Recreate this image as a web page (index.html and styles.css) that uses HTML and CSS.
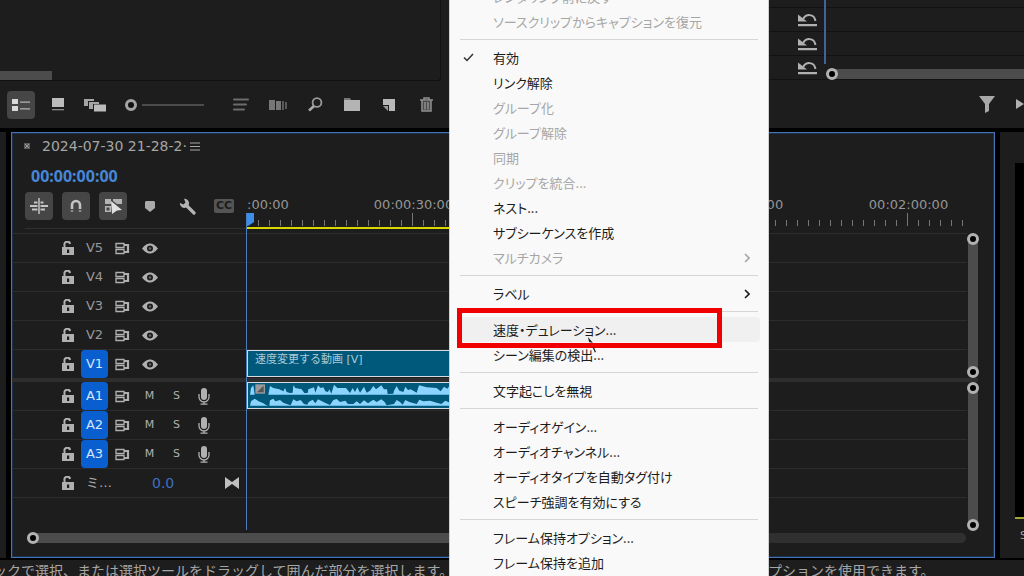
FILE: index.html
```html
<!DOCTYPE html>
<html lang="ja">
<head>
<meta charset="utf-8">
<meta name="viewport" content="width=device-width, initial-scale=1">
<title>2024-07-30 21-28-2</title>
<link rel="stylesheet" href="styles.css">
</head>
<body>
<svg class="defs" aria-hidden="true">
  <symbol id="lock" viewBox="0 0 12 15"><path d="M2.500 7V4a2.800 2.800 0 0 1 5.600-1" fill="none" stroke="currentColor" stroke-width="2"/><path fill="currentColor" fill-rule="evenodd" d="M0 6h12v8H0zM5 8.500h2.200v3.500H5z"/></symbol>
  <symbol id="sync" viewBox="0 0 15 13"><path d="M1 1.500h8v4H1zM1 7.500h8v4H1z" fill="none" stroke="currentColor" stroke-width="1.300"/><path d="M9 3h4v7H9" fill="none" stroke="currentColor" stroke-width="2.200"/></symbol>
  <symbol id="eye" viewBox="0 0 16 11"><path fill="currentColor" fill-rule="evenodd" d="M0 5.500C3 1.500 6 .5 8 .5s5 1 8 5c-3 4-6 5-8 5s-5-1-8-5zM8 2.500a3 3 0 1 0 0 6 3 3 0 0 0 0-6z"/><circle cx="8" cy="5.500" r="1.200" fill="currentColor" opacity=".5"/></symbol>
  <symbol id="mic" viewBox="0 0 12 17"><rect x="3" y="0" width="6" height="12" rx="3" fill="currentColor"/><path d="M1 6v3a5 5 0 0 0 10 0V6M6 14v2M2.500 16.200h7" fill="none" stroke="currentColor" stroke-width="1.300"/></symbol>
  <symbol id="undo" viewBox="0 0 19 14"><path d="M5 6C8 1 16 0 17.500 8" fill="none" stroke="currentColor" stroke-width="2"/><path fill="currentColor" d="M0 1.500L9 8.500H0zM0 11h19v2.200H0z"/></symbol>
  <symbol id="chev" viewBox="0 0 6 10"><path d="M1 1l4 4-4 4" fill="none" stroke="currentColor" stroke-width="1.600"/></symbol>
</svg>

<div class="app">
  <div class="upper">
    <section class="project">
      <div class="bin"><div class="bin-scroll"></div></div>
      <div class="bin-tools">
        <button class="tool on" aria-label="リスト表示"><svg width="20" height="14" viewBox="0 0 20 14"><path fill="#d8d8d8" d="M1 1h6v5H1zM1 8h6v5H1z"/><path fill="#b4b4b4" d="M9 3.500h10v1.300H9zM9 10.200h10v1.300H9z"/></svg></button>
        <button class="tool" aria-label="アイコン表示"><svg width="12" height="13" viewBox="0 0 12 13"><path fill="#bcbcbc" d="M0 0h12v9H0z"/><path fill="#8c8c8c" d="M0 11h12v1.300H0z"/></svg></button>
        <button class="tool" aria-label="フリーフォーム表示"><svg width="22" height="14" viewBox="0 0 22 14"><path fill="#a4a4a4" d="M0 1h10v2H4v5H0zM5 4h10v2H9v5H5z"/><path fill="#bcbcbc" d="M10 6.500h12v7H10z"/></svg></button>
        <input class="zoom" type="range" min="0" max="100" value="0" aria-label="ズーム">
        <button class="tool" aria-label="並べ替え"><svg width="16" height="13" viewBox="0 0 16 13"><path d="M1 1.500h14M1 6.500h12M1 11.500h10" stroke="#6c6c6c" stroke-width="2" stroke-linecap="round"/></svg></button>
        <button class="tool" aria-label="シーケンスへ自動化"><svg width="18" height="10" viewBox="0 0 18 10"><path fill="#777" d="M0 0h6v10H0zM7 1h5v9H7z"/><path fill="#595959" d="M13 1h2v9h-2zM16 2h2v7h-2z"/></svg></button>
        <button class="tool" aria-label="検索"><svg width="15" height="15" viewBox="0 0 15 15"><circle cx="9" cy="5.500" r="4.400" fill="none" stroke="#9a9a9a" stroke-width="1.800"/><path d="M6 9l-5 4.500" stroke="#aaa" stroke-width="2.600"/></svg></button>
        <button class="tool" aria-label="新規ビン"><svg width="16" height="13" viewBox="0 0 16 13"><path fill="#b4b4b4" d="M0 2h16v11H0z"/><path fill="#777" d="M0 0h6l1 2H0z"/></svg></button>
        <button class="tool" aria-label="新規項目"><svg width="13" height="14" viewBox="0 0 13 14"><path fill="#b8b8b8" d="M0 1h12v12H6V7H0z"/><path fill="#999" d="M0 8h5v5z"/></svg></button>
        <button class="tool" aria-label="消去"><svg width="13" height="15" viewBox="0 0 13 15"><path d="M2 4h9v10H2z" fill="#4a4a4a"/><path d="M0 3h13M4 2.500V1h5v1.500M2 3.500V14h9V3.500M5 5v7.500M8 5v7.500" fill="none" stroke="#909090" stroke-width="1.500"/></svg></button>
      </div>
    </section>
    <section class="effects">
      <div class="props">
        <div class="prop short"></div>
        <div class="prop"><svg width="19" height="14"><use href="#undo"/></svg></div>
        <div class="prop"><svg width="19" height="14"><use href="#undo"/></svg></div>
        <div class="prop"><svg width="19" height="14"><use href="#undo"/></svg></div>
        <div class="prop-line"></div>
        <div class="prop-bar"><i class="knob"></i></div>
      </div>
      <div class="fx-tools">
        <button class="plain" aria-label="フィルター"><svg width="16" height="17" viewBox="0 0 16 17"><path fill="#a8a8a8" d="M0 0h16L10 8v7l-4 2V8z"/></svg></button>
        <button class="plain" aria-label="再生"><svg width="8" height="10" viewBox="0 0 8 10"><path fill="#b0b0b0" d="M0 0l8 5-8 5z"/></svg></button>
      </div>
    </section>
  </div>

  <div class="middle">
    <div class="sliver"></div>
    <main class="timeline">
      <div class="tab">
        <button class="plain close" aria-label="閉じる"><svg width="6" height="6" viewBox="0 0 6 6"><path fill="#5a5a5a" d="M0 0h6v6H0z"/><path d="M1 1l4 4M5 1L1 5" stroke="#999"/></svg></button>
        <span class="seq">2024-07-30 21-28-2·</span>
        <button class="plain" aria-label="パネルメニュー"><svg width="10" height="9" viewBox="0 0 10 9"><path d="M0 1h10M0 4.500h10M0 8h10" stroke="#a8a8a8" stroke-width="1.200"/></svg></button>
      </div>
      <div class="timecode">00:00:00:00</div>
      <div class="head-row">
        <div class="seq-tools">
          <button class="tool on" aria-label="ネスト"><svg width="18" height="16" viewBox="0 0 18 16"><path d="M9 0v16" stroke="#c4c4c4" stroke-width="1.500"/><path d="M4 4.500h3.500M10.500 4.500h3M0 8h7.500M10.500 8H18M2 11.500h5.500M10.500 11.500H15" stroke="#c4c4c4" stroke-width="2.200"/></svg></button>
          <button class="tool on" aria-label="スナップ"><svg width="12" height="14" viewBox="0 0 12 14"><path d="M2 10V6a4 4 0 0 1 8 0v4" fill="none" stroke="#c4c4c4" stroke-width="2.600"/><path d="M2 11v2M10 11v2" stroke="#888" stroke-width="2.600"/></svg></button>
          <button class="tool on" aria-label="リンクされた選択"><svg width="17" height="16" viewBox="0 0 17 16"><path fill="#b4b4b4" d="M0 1h6v5H0zM8 1h9v5h-5L8 3zM0 8h6v6H0zM1.500 9.500v3h3v-3z" fill-rule="evenodd"/><path fill="#e0e0e0" d="M6 3l11 9-5 .5L7 16z"/></svg></button>
          <button class="tool" aria-label="マーカー"><svg width="10" height="11" viewBox="0 0 10 11"><path fill="#aaa" d="M1 0h8l1 1v6l-5 4-5-4V1z"/></svg></button>
          <button class="tool" aria-label="表示設定"><svg width="17" height="17" viewBox="0 0 17 17"><path d="M7 7l8 8" stroke="#b4b4b4" stroke-width="3.200" stroke-linecap="round"/><path d="M5 .8l1.500 3.700-2 2L.8 5a4.500 4.500 0 0 0 6.800 4.300l2-2A4.500 4.500 0 0 0 5 .8z" fill="#b4b4b4"/></svg></button>
          <button class="tool cc" aria-label="キャプション"><span>CC</span></button>
        </div>
        <div class="ruler">
          <div class="marks"><span class="first">:00:00</span><span>00:00:30:00</span><span>00:01:00:00</span><span>00:01:30:00</span><span>00:02:00:00</span></div>
          <div class="ticks"></div>
          <div class="work"></div>
        </div>
      </div>

      <div class="group">
        <div class="tracks">
          <div class="track"><div class="head"><svg width="12" height="15"><use href="#lock"/></svg><span class="chip">V5</span><svg width="15" height="13"><use href="#sync"/></svg><svg class="mid" width="16" height="11"><use href="#eye"/></svg></div><div class="lane"></div></div>
          <div class="track"><div class="head"><svg width="12" height="15"><use href="#lock"/></svg><span class="chip">V4</span><svg width="15" height="13"><use href="#sync"/></svg><svg class="mid" width="16" height="11"><use href="#eye"/></svg></div><div class="lane"></div></div>
          <div class="track"><div class="head"><svg width="12" height="15"><use href="#lock"/></svg><span class="chip">V3</span><svg width="15" height="13"><use href="#sync"/></svg><svg class="mid" width="16" height="11"><use href="#eye"/></svg></div><div class="lane"></div></div>
          <div class="track"><div class="head"><svg width="12" height="15"><use href="#lock"/></svg><span class="chip">V2</span><svg width="15" height="13"><use href="#sync"/></svg><svg class="mid" width="16" height="11"><use href="#eye"/></svg></div><div class="lane"></div></div>
          <div class="track"><div class="head"><svg width="12" height="15"><use href="#lock"/></svg><span class="chip sel">V1</span><svg width="15" height="13"><use href="#sync"/></svg><svg class="mid" width="16" height="11"><use href="#eye"/></svg></div><div class="lane"><div class="clip">速度変更する動画 [V]</div></div></div>
        </div>
        <div class="vbar"><i class="knob"></i><i class="knob"></i></div>
      </div>
      <div class="divider"></div>
      <div class="group audio">
        <div class="tracks">
          <div class="track"><div class="head"><svg width="12" height="15"><use href="#lock"/></svg><span class="chip sel">A1</span><svg width="15" height="13"><use href="#sync"/></svg><span class="mid">M</span><span class="mid">S</span><svg class="mid" width="12" height="17"><use href="#mic"/></svg></div><div class="lane"><div class="clip wave"><svg width="202" height="25" viewBox="24 163 606 75" preserveAspectRatio="none"><path fill="#8ad4ff" d="M30 198L33 178 40 170 44 198zM85 198L90 172 100 178 118 182 130 188 135 178 140 190 150 193 158 192 160 170 166 178 185 182 193 193 203 193 205 182 222 176 226 192 234 170 242 178 250 176 256 188 264 190 268 182 274 195 282 168 292 178 318 178 330 193 338 178 345 190 352 176 360 192 372 174 380 192 390 186 400 172 408 182 424 170 432 182 441 182 443 196 460 195 462 186 470 172 478 186 490 190 496 174 504 184 512 182 530 192 537 170 560 176 590 178 602 188 612 174 622 180 630 170V198z"/><path fill="#8ad4ff" d="M30 231L33 218 44 210 56 218 70 224 78 229 84 231zM88 231L90 215 100 210 106 218 120 214 130 222 140 226 152 230 160 212 170 218 182 214 192 226 202 228 206 220 218 213 226 224 234 212 246 218 258 224 270 229 280 214 290 211 300 220 316 216 324 226 340 226 350 218 360 226 372 215 384 224 400 213 410 220 424 212 434 220 440 230 462 226 470 214 480 220 488 228 496 214 508 220 530 226 538 213 550 218 570 216 590 222 604 226 616 216 630 222V231z"/><path d="M46 167h29v28H46z" fill="#9b9b9b"/><path d="M51 191l20-20v20z" fill="#555"/></svg></div></div></div>
          <div class="track"><div class="head"><svg width="12" height="15"><use href="#lock"/></svg><span class="chip sel">A2</span><svg width="15" height="13"><use href="#sync"/></svg><span class="mid">M</span><span class="mid">S</span><svg class="mid" width="12" height="17"><use href="#mic"/></svg></div><div class="lane"></div></div>
          <div class="track"><div class="head"><svg width="12" height="15"><use href="#lock"/></svg><span class="chip sel">A3</span><svg width="15" height="13"><use href="#sync"/></svg><span class="mid">M</span><span class="mid">S</span><svg class="mid" width="12" height="17"><use href="#mic"/></svg></div><div class="lane"></div></div>
          <div class="track"><div class="head mix"><svg width="12" height="15"><use href="#lock"/></svg><span class="mixname">ミ…</span><span class="level">0.0</span><svg width="14" height="12" viewBox="0 0 14 12"><path fill="#c0c0c0" d="M0 0l7 5 7-5v12L7 7l-7 5z"/></svg></div><div class="lane"></div></div>
        </div>
        <div class="vbar"><i class="knob"></i><i class="knob"></i></div>
      </div>
      <div class="hbar"><div class="thumb"><i class="knob"></i></div></div>
      <div class="playhead"><svg width="7" height="13" viewBox="0 0 7 13"><path fill="#3b8eea" d="M0 0h7v9l-6 4H0z"/></svg></div>
    </main>
    <aside class="meters"><div class="meter"></div><span>S</span></aside>
  </div>

  <footer class="status"><span class="hint">ックで選択、または選択ツールをドラッグして囲んだ部分を選択します。</span><span>プションを使用できます。</span></footer>

  <div class="menu" role="menu">
    <button class="item" disabled>レンダリング前に戻す</button>
    <button class="item" disabled>ソースクリップからキャプションを復元</button>
    <hr>
    <button class="item"><svg class="check" width="11" height="9" viewBox="0 0 11 9"><path d="M1 4.500L4 7.500 10 1" fill="none" stroke="#333" stroke-width="1.500"/></svg>有効</button>
    <button class="item">リンク解除</button>
    <button class="item" disabled>グループ化</button>
    <button class="item" disabled>グループ解除</button>
    <button class="item" disabled>同期</button>
    <button class="item" disabled>クリップを統合...</button>
    <button class="item">ネスト...</button>
    <button class="item">サブシーケンスを作成</button>
    <button class="item" disabled>マルチカメラ<svg class="sub" width="6" height="10"><use href="#chev"/></svg></button>
    <hr>
    <button class="item">ラベル<svg class="sub" width="6" height="10"><use href="#chev"/></svg></button>
    <hr>
    <button class="item hover">速度・デュレーション...<span class="frame"></span><svg class="cursor" width="10" height="17" viewBox="0 0 10 17"><path fill="#222" d="M1 0l5 6-4-1zM5.500 10l1.200-.6L9 15l-1.200.5z"/></svg></button>
    <button class="item">シーン編集の検出...</button>
    <hr>
    <button class="item">文字起こしを無視</button>
    <hr>
    <button class="item">オーディオゲイン...</button>
    <button class="item">オーディオチャンネル...</button>
    <button class="item">オーディオタイプを自動タグ付け</button>
    <button class="item">スピーチ強調を有効にする</button>
    <hr>
    <button class="item">フレーム保持オプション...</button>
    <button class="item">フレーム保持を追加</button>
  </div>
</div>
</body>
</html>
```

FILE: styles.css
```css
:root {
  --panel: #1d1d1d;
  --line: #2d2d2d;
  --icon: #b0b0b0;
  --text: #a6a6a6;
  --bar: #4c4c4c;
}
* { box-sizing: border-box; }
body {
  margin: 0;
  background: #000;
  color: var(--text);
  font: 13px/16px "DejaVu Sans", "Noto Sans CJK JP", sans-serif;
}
button {
  border: 0;
  padding: 0;
  background: none;
  color: inherit;
  font: inherit;
}
svg { display: block; flex: none; }
.defs { position: absolute; width: 0; height: 0; }
.app {
  position: relative;
  display: flex;
  flex-direction: column;
  height: 100vh;
  overflow: hidden;
}

/* Upper panels */
.upper { display: grid; grid-template-columns: 449px 1fr; margin-bottom: 4px; background: var(--panel); }
.bin {
  display: flex;
  align-items: flex-end;
  height: 81px;
  margin-right: 8px;
  border: solid #111;
  border-width: 0 1px 1px 0;
  border-bottom-right-radius: 3px;
}
.bin-scroll { width: 52px; height: 9px; background: var(--bar); }
.bin-tools { display: flex; align-items: center; gap: 9px; height: 47px; padding-left: 7px; }
.tool {
  display: grid;
  place-items: center;
  width: 28px;
  height: 28px;
  border-radius: 4px;
}
.tool.on { background: #464646; }
.plain { display: grid; place-items: center; }
.zoom {
  appearance: none;
  width: 79px;
  height: 12px;
  margin: 0 14px 0 7px;
  background: linear-gradient(var(--bar), var(--bar)) 17px 5px / 62px 2px no-repeat;
}
.zoom::-webkit-slider-thumb {
  appearance: none;
  width: 12px;
  height: 12px;
  border: 3px solid #a4a4a4;
  border-radius: 50%;
  background: #111;
}
.knob {
  width: 12px;
  height: 12px;
  flex: none;
  border: 3px solid #b2b2b2;
  border-radius: 50%;
  background: #000;
}
.effects { padding-left: 320px; }
.props { position: relative; color: var(--icon); }
.prop {
  display: flex;
  align-items: center;
  height: 24px;
  padding-left: 29px;
  border-bottom: 1px solid #121212;
}
.prop.short { height: 8px; }
.prop-line { position: absolute; top: 0; bottom: 16px; left: 55px; width: 2px; background: #3d659c; }
.prop-bar { position: absolute; right: 0; bottom: 1px; left: 63px; height: 10px; background: var(--bar); }
.prop-bar .knob { display: block; position: absolute; top: -1px; left: -6px; }
.fx-tools { display: flex; align-items: center; justify-content: flex-end; gap: 21px; height: 48px; }

/* Timeline */
.middle { display: flex; gap: 5px; flex: 1; min-height: 0; }
.sliver { width: 6px; background: var(--panel); }
.timeline {
  position: relative;
  display: flex;
  flex-direction: column;
  flex: 1;
  min-width: 0;
  border: 1px solid #4674b4;
  box-shadow: inset 0 0 0 1px #1c304e;
  background: var(--panel);
}
.tab { display: flex; align-items: center; height: 26px; padding-left: 12px; }
.seq { margin: 0 3px 0 12px; font-size: 14px; }
.timecode {
  height: 33px;
  padding-left: 19px;
  color: #4787d8;
  font: bold 16px/34px "Noto Sans", sans-serif;
}
.head-row { display: grid; grid-template-columns: 235px 1fr; height: 41px; margin-right: 27px; }
.seq-tools { display: flex; gap: 9px; height: 37px; margin-left: 13px; border-bottom: 1px solid #303030; }
.cc span {
  width: 20px;
  border-radius: 2px;
  background: #555;
  color: #1d1d1d;
  font: bold 11px/14px "DejaVu Sans", sans-serif;
}
.ruler { overflow: hidden; }
.marks { display: flex; padding-top: 5px; }
.marks span { flex: 0 0 165px; color: #969696; text-align: center; }
.marks .first { flex-basis: 84px; text-align: left; }
.ticks {
  height: 13px;
  margin-bottom: 1px;
  background:
    repeating-linear-gradient(to right, #777 0 1px, transparent 1px 165px),
    repeating-linear-gradient(to right, #777 0 1px, transparent 1px 11px) 0 7px no-repeat;
}
.work { width: 300px; height: 2px; background: #d8d800; }
.group { display: grid; grid-template-columns: 1fr 10px; gap: 1px; margin-right: 16px; }
.group.audio { flex: 1; }
.tracks { min-width: 0; }
.track { display: grid; grid-template-columns: 235px 1fr; height: 29px; border-top: 1px solid var(--line); }
.audio .tracks { padding-bottom: 31px; }
.audio .track { border-top: 0; border-bottom: 1px solid var(--line); }
.head {
  display: grid;
  grid-template-columns: 19px 34px 21px 27px 27px 27px;
  align-items: center;
  padding-left: 50px;
  color: var(--icon);
}
.chip { width: 27px; border-radius: 4px; color: #999; line-height: 28px; text-align: center; }
.chip.sel { background: #0a5fd0; color: #d4e4fa; }
.mid { justify-self: center; }
span.mid { font-size: 11px; }
.head.mix { grid-template-columns: 24px 66px 73px 14px; }
.level { color: #3f6fc4; font-size: 14px; }
.clip {
  width: 300px;
  height: 27px;
  padding-left: 7px;
  overflow: hidden;
  border: 1px solid #d6dde2;
  background: #00587a;
  color: #a9cbd8;
  font-size: 11px;
  line-height: 18px;
}
.clip.wave { padding-left: 0; }
.vbar {
  display: flex;
  flex-direction: column;
  align-items: center;
  justify-content: space-between;
  background: linear-gradient(var(--bar), var(--bar)) 0 6px / 10px calc(100% - 12px) no-repeat;
}
.divider { height: 4px; margin-right: 16px; background: #2e2e2e; }
.hbar { height: 10px; margin: 2px 28px 14px 15px; border-radius: 5px; background: #303030; }
.thumb { display: flex; align-items: center; width: 50%; height: 10px; border-radius: 5px; background: var(--bar); }
.playhead { position: absolute; top: 80px; bottom: 27px; left: 234px; border-left: 1px solid #4a7cc0; }
.meters { display: flex; flex-direction: column; width: 24px; padding: 31px 0 14px 15px; background: var(--panel); }
.meter { flex: 1; margin-bottom: 9px; border-bottom: 2px solid #a0a830; background: #000; }
.meters span { padding-left: 5px; font-size: 11px; }

/* Status line */
.status {
  display: flex;
  height: 18px;
  padding-top: 2px;
  overflow: hidden;
  background: var(--panel) content-box;
  font: 14px/20px "Noto Sans CJK JP", sans-serif;
  white-space: nowrap;
}
.hint { flex: none; width: 775px; margin-left: -7px; }

/* Context menu */
.menu {
  position: absolute;
  top: -16px;
  bottom: 0;
  left: 449px;
  width: 320px;
  padding: 0 8px;
  border: solid #d0d0d0;
  border-width: 0 1px;
  background: #f9f9f9;
  color: #1c1c1c;
  font: 13px/25px "Noto Sans CJK JP", sans-serif;
  font-feature-settings: "palt";
}
.item {
  position: relative;
  display: flex;
  align-items: center;
  width: 100%;
  height: 25px;
  padding: 0 10px 0 35px;
  border-radius: 4px;
  text-align: left;
  white-space: nowrap;
}
.item:disabled { color: #a6a6a6; }
.item.hover { background: #f0f0f0; }
.check { position: absolute; left: 5px; }
.sub { margin-left: auto; }
.menu hr { height: 1px; margin: 5px 2px; border: 0; background: #d6d6d6; }
.frame { position: absolute; top: -9px; left: -1px; width: 265px; height: 40px; border: 5px solid #f00000; }
.cursor { position: absolute; top: 20px; left: 129px; }
```
